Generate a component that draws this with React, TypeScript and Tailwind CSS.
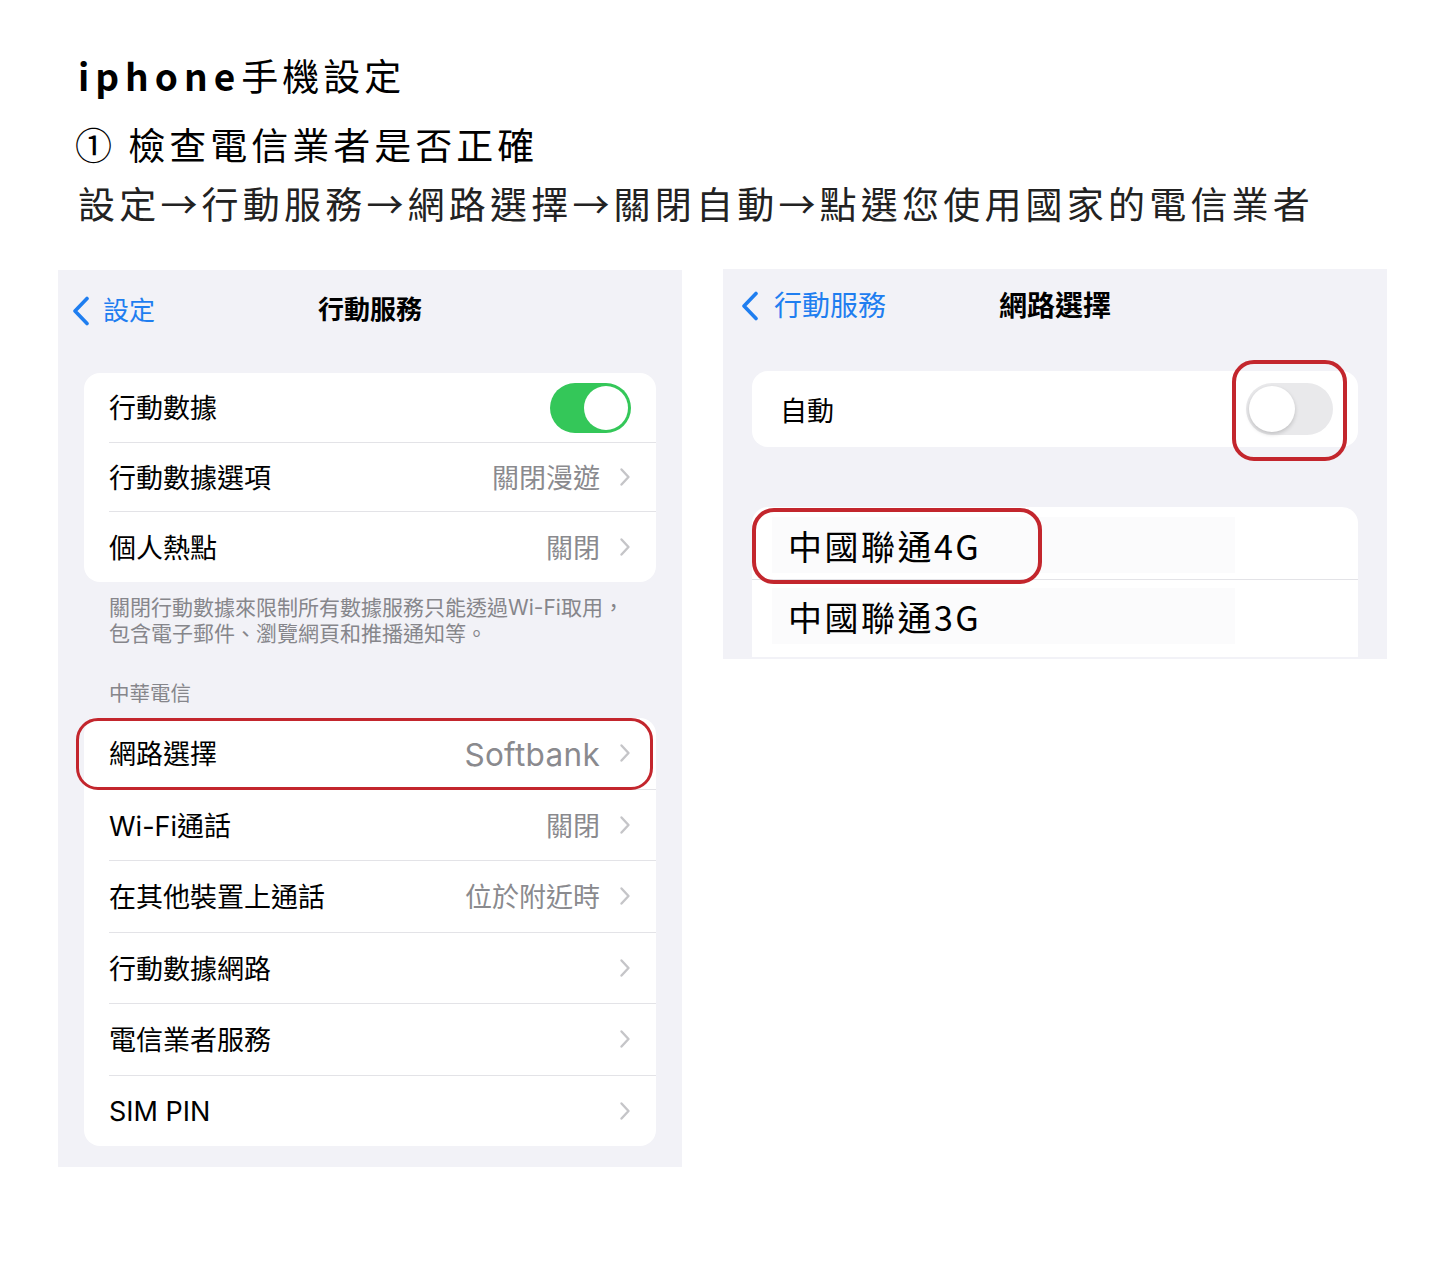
import React from 'react'

const ui = "font-['Inter','Noto_Sans_CJK_TC',sans-serif]"
const cjk = "font-['Noto_Sans_CJK_TC','Noto_Sans_CJK_JP',sans-serif]"

function Chevron() {
  return (
    <svg width="12" height="20" viewBox="0 0 12 20" className="shrink-0">
      <path d="M2.5 2.5 L9.5 10 L2.5 17.5" fill="none" stroke="#c5c5c8" strokeWidth="2.4" strokeLinecap="round" strokeLinejoin="round" />
    </svg>
  )
}

function BackChevron() {
  return (
    <svg width="20" height="30" viewBox="0 0 20 30" className="shrink-0">
      <path d="M16 2.5 L4 15 L16 27.5" fill="none" stroke="#1f7ef0" strokeWidth="3.6" strokeLinecap="round" strokeLinejoin="round" />
    </svg>
  )
}

interface RowProps {
  label: string
  value?: string
  valueClass?: string
  chevron?: boolean
  last?: boolean
  height: string
  children?: React.ReactNode
}

function Row({ label, value, valueClass, chevron = true, last, height, children }: RowProps) {
  return (
    <div className={`pl-[25px] ${height}`}>
      <div className={`h-full flex items-center pr-[25px] ${last ? '' : 'border-b border-[#e3e3e7]'}`}>
        <span className="text-[27px] text-black flex-1 pt-[4px]">{label}</span>
        {value && <span className={`text-[#8a8a8e] mr-[19px] pt-[4px] ${valueClass ?? 'text-[27px]'}`}>{value}</span>}
        {chevron && <Chevron />}
        {children}
      </div>
    </div>
  )
}

export default function App() {
  return (
    <div className={`w-[1440px] h-[1287px] bg-white ${cjk}`}>
      <div className="pl-[78px] pt-[50px] text-black">
        <div className="text-[37px] leading-[50px] tracking-[4px]">
          <span className="font-bold tracking-[6px]">iphone</span>手機設定
        </div>
        <div className="text-[37px] leading-[50px] tracking-[4px] mt-[19px] -ml-[3px]">① 檢查電信業者是否正確</div>
        <div className="text-[37px] leading-[50px] tracking-[4.2px] mt-[9px] text-[#222]">
          設定→行動服務→網路選擇→關閉自動→點選您使用國家的電信業者
        </div>
      </div>

      <div className={`flex items-start pl-[58px] mt-[42px] gap-[41px] ${ui}`}>
        {/* left panel */}
        <div className="w-[624px] h-[897px] bg-[#f2f2f7] flex flex-col">
          <div className="relative h-[78px] flex items-center justify-center">
            <div className="absolute left-[13px] top-[21px] flex items-center gap-[12px]">
              <BackChevron />
              <span className="text-[26px] text-[#1f7ef0]">設定</span>
            </div>
            <span className="text-[26px] font-bold text-black">行動服務</span>
          </div>

          <div className="mx-[26px] mt-[25px] bg-white rounded-[16px] overflow-hidden">
            <Row label="行動數據" chevron={false} height="h-[70px]">
              <div className="w-[81px] h-[50px] rounded-full bg-[#34c759] flex items-center justify-end pr-[3px]">
                <div className="w-[44px] h-[44px] rounded-full bg-white" />
              </div>
            </Row>
            <Row label="行動數據選項" value="關閉漫遊" height="h-[69px]" />
            <Row label="個人熱點" value="關閉" height="h-[70px]" last />
          </div>

          <p className="mx-[51px] mt-[13px] text-[21px] leading-[26px] text-[#86868b]">
            關閉行動數據來限制所有數據服務只能透過Wi-Fi取用，<br />包含電子郵件、瀏覽網頁和推播通知等。
          </p>

          <p className="mx-[51px] mt-[34px] text-[20.5px] leading-[26px] text-[#86868b]">中華電信</p>

          <div className="relative mx-[26px] mt-[11px] bg-white rounded-[16px]">
            <Row label="網路選擇" value="Softbank" valueClass="text-[31.5px] leading-[36px] tracking-[0.3px] font-['Inter',sans-serif]" height="h-[71.5px]" />
            <Row label="Wi-Fi通話" value="關閉" height="h-[71.5px]" />
            <Row label="在其他裝置上通話" value="位於附近時" height="h-[71.5px]" />
            <Row label="行動數據網路" height="h-[71.5px]" />
            <Row label="電信業者服務" height="h-[71.5px]" />
            <Row label="SIM PIN" height="h-[70px]" last />
            <div className="absolute -left-[8px] top-0 w-[577px] h-[72px] rounded-[22px] border-[3.5px] border-[#c3262d]" />
          </div>
        </div>

        {/* right panel */}
        <div className="w-[664px] h-[390px] -mt-[1px] bg-[#f2f2f7] flex flex-col overflow-hidden">
          <div className="relative h-[70px] flex items-center justify-center">
            <div className="absolute left-[17px] top-[16px] flex items-center gap-[14px]">
              <BackChevron />
              <span className="text-[28px] text-[#1f7ef0]">行動服務</span>
            </div>
            <span className="text-[28px] font-bold text-black pt-[3px]">網路選擇</span>
          </div>

          <div className="relative mx-[29px] mt-[32px] h-[76px] bg-white rounded-[16px] flex items-center pl-[28px] pr-[25px]">
            <span className="text-[27px] text-black flex-1 pt-[7px]">自動</span>
            <div className="w-[87px] h-[52px] rounded-full bg-[#e9e9eb] flex items-center pl-[3px]">
              <div className="w-[46px] h-[46px] rounded-full bg-white shadow-[0_2px_4px_rgba(0,0,0,0.18)]" />
            </div>
            <div className="absolute left-[480px] -top-[11px] w-[115px] h-[101px] rounded-[22px] border-4 border-[#c3262d]" />
          </div>

          <div className={`relative mx-[29px] mt-[60px] bg-white rounded-t-[16px] ${cjk}`}>
            <div className="h-[73px] pl-[20px] pt-[10px] border-b border-[#e3e3e7]">
              <div className="w-[463px] h-[56px] bg-[#fbfbfc] flex items-center pl-[16px]">
                <span className="text-[34px] tracking-[2.5px] text-black">中國聯通4G</span>
              </div>
            </div>
            <div className="h-[77px] pl-[20px] pt-[8px]">
              <div className="w-[463px] h-[56px] bg-[#fbfbfc] flex items-center pl-[16px]">
                <span className="text-[34px] tracking-[2.5px] text-black">中國聯通3G</span>
              </div>
            </div>
            <div className="absolute left-0 top-[1px] w-[290px] h-[76px] rounded-[22px] border-4 border-[#c3262d]" />
          </div>
        </div>
      </div>
    </div>
  )
}
